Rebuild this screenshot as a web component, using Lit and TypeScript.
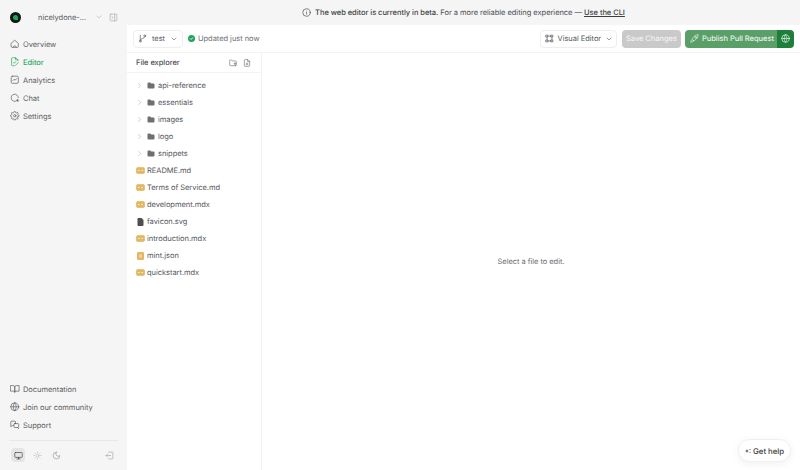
import { LitElement, html, css, svg } from "lit";
import { customElement } from "lit/decorators.js";

const ic = (body: unknown, size = 10, sw = 1.8) => html`<svg class="ic" width=${size} height=${size} viewBox="0 0 24 24" fill="none" stroke="currentColor" stroke-width=${sw} stroke-linecap="round" stroke-linejoin="round">${body}</svg>`;

const P = {
  home: svg`<path d="M3 11l9-8 9 8v8a2 2 0 0 1-2 2H5a2 2 0 0 1-2-2z"/><path d="M8 21c0-5 8-5 8 0"/>`,
  editor: svg`<path d="M20 9V7l-5-5H6a2 2 0 0 0-2 2v16a2 2 0 0 0 2 2h5"/><path d="M14 2v5h6"/><path d="M9 14l2 2 3-4"/><path d="M14 21l7-7"/>`,
  chart: svg`<rect x="3" y="3" width="18" height="18" rx="3"/><path d="M7 14l3-3 3 2 4-4"/>`,
  chat: svg`<path d="M21 12a9 9 0 1 0-4 7.5l4 1.5-1-4"/><circle cx="18" cy="18" r="1"/>`,
  gear: svg`<circle cx="12" cy="12" r="3"/><path d="M19.4 15a1.7 1.7 0 0 0 .3 1.8l.1.1a2 2 0 1 1-2.9 2.9l-.1-.1a1.7 1.7 0 0 0-2.8 1.2V21a2 2 0 1 1-4 0v-.1a1.7 1.7 0 0 0-2.9-1.1l-.1.1a2 2 0 1 1-2.8-2.9l.1-.1A1.7 1.7 0 0 0 3 14H3a2 2 0 1 1 0-4h.1a1.7 1.7 0 0 0 1.1-2.9l-.1-.1A2 2 0 1 1 7 4.2l.1.1a1.7 1.7 0 0 0 2.9-1.2V3a2 2 0 1 1 4 0v.1a1.7 1.7 0 0 0 2.9 1.2l.1-.1a2 2 0 1 1 2.8 2.8l-.1.1a1.7 1.7 0 0 0 1.2 2.9h.1a2 2 0 1 1 0 4h-.1a1.7 1.7 0 0 0-1.500 1z"/>`,
  book: svg`<path d="M2 4h6a4 4 0 0 1 4 4v13a3 3 0 0 0-3-3H2z"/><path d="M22 4h-6a4 4 0 0 0-4 4v13a3 3 0 0 1 3-3h7z"/>`,
  globe: svg`<circle cx="12" cy="12" r="10"/><path d="M2 12h20"/><path d="M12 2a15 15 0 0 1 0 20a15 15 0 0 1 0-20"/>`,
  support: svg`<path d="M14 9V5a2 2 0 0 0-2-2H4a2 2 0 0 0-2 2v12l4-3h3"/><rect x="10" y="9" width="12" height="10" rx="2"/><path d="M19 19l3 3"/>`,
  monitor: svg`<rect x="2" y="4" width="20" height="13" rx="2"/><path d="M8 21h8M12 17v4"/>`,
  sun: svg`<circle cx="12" cy="12" r="4"/><path d="M12 2v2M12 20v2M4.9 4.9l1.4 1.4M17.7 17.7l1.4 1.4M2 12h2M20 12h2M4.9 19.1l1.4-1.4M17.7 6.300l1.4-1.400"/>`,
  moon: svg`<path d="M12 3a6 6 0 0 0 9 9 9 9 0 1 1-9-9z"/>`,
  collapse: svg`<path d="M10 3H19a2 2 0 0 1 2 2v14a2 2 0 0 1-2 2H10"/><path d="M15 12H3M7 8l-4 4 4 4" />`,
  panel: svg`<rect x="3" y="3" width="18" height="18" rx="2"/><path d="M15 3v18"/><path d="M8 9l3 3-3 3"/>`,
  branch: svg`<circle cx="6" cy="19" r="2.500"/><circle cx="18" cy="5" r="2.500"/><path d="M6 3v13.500"/><path d="M6 16c0-5 12-3 12-8.500"/>`,
  chevD: svg`<path d="M6 9l6 6 6-6"/>`,
  chevR: svg`<path d="M9 5l7 7-7 7"/>`,
  info: svg`<circle cx="12" cy="12" r="10"/><path d="M12 16v-4M12 8h.01"/>`,
  newFolder: svg`<path d="M20 20H4a2 2 0 0 1-2-2V5a2 2 0 0 1 2-2h4l3 3h9a2 2 0 0 1 2 2v10a2 2 0 0 1-2 2z"/><path d="M15 14h6M18 11v6" />`,
  newFile: svg`<path d="M14 2H6a2 2 0 0 0-2 2v16a2 2 0 0 0 2 2h12a2 2 0 0 0 2-2V8z"/><path d="M14 2v6h6"/><path d="M9 15h6M12 12v6"/>`,
  visual: svg`<rect x="3" y="3" width="5" height="5"/><rect x="16" y="3" width="5" height="5"/><rect x="3" y="16" width="5" height="5"/><rect x="16" y="16" width="5" height="5"/><path d="M8 5.500h8M8 18.500h8M5.500 8v8M18.500 8v8"/>`,
  rocket: svg`<path d="M5 15c-2 1-3 5-3 7 2 0 6-1 7-3"/><path d="M9 18l-3-3c1-5 6-13 16-13 0 10-8 15-13 16z"/><circle cx="15" cy="9" r="2"/>`,
};

const folder = html`<svg width="8" height="7" viewBox="0 0 16 14"><path fill="#6f6f6f" d="M1 3a2 2 0 0 1 2-2h3.500l2 2H13a2 2 0 0 1 2 2v6a2 2 0 0 1-2 2H3a2 2 0 0 1-2-2z"/></svg>`;
const mdIcon = html`<svg width="9" height="7" viewBox="0 0 18 14"><rect x="1" y="1" width="16" height="12" rx="2.500" fill="#e2b863" stroke="#d8a648"/><path d="M4 7h3M11 7h3" stroke="#fff" stroke-width="1.600"/></svg>`;
const fileIcon = html`<svg width="7" height="8" viewBox="0 0 14 16"><path fill="#4d4f53" d="M2 0h7l4 4v10a2 2 0 0 1-2 2H2a2 2 0 0 1-1-2V1a2 2 0 0 1 1-1z"/></svg>`;
const jsonIcon = html`<svg width="7" height="8" viewBox="0 0 14 16"><rect width="14" height="16" rx="2.500" fill="#e2b863"/><path d="M5 5l4 6M9 5l-4 6" stroke="#fff" stroke-width="1.400"/></svg>`;

const navTop = [
  ["Overview", P.home, false],
  ["Editor", P.editor, true],
  ["Analytics", P.chart, false],
  ["Chat", P.chat, false],
  ["Settings", P.gear, false],
] as const;
const navBottom = [
  ["Documentation", P.book],
  ["Join our community", P.globe],
  ["Support", P.support],
] as const;
const folders = ["api-reference", "essentials", "images", "logo", "snippets"];
const files = [
  ["README.md", mdIcon],
  ["Terms of Service.md", mdIcon],
  ["development.mdx", mdIcon],
  ["favicon.svg", fileIcon],
  ["introduction.mdx", mdIcon],
  ["mint.json", jsonIcon],
  ["quickstart.mdx", mdIcon],
] as const;

@customElement("app-root")
export class AppRoot extends LitElement {
  static styles = css`
    :host {
      display: grid;
      grid-template-columns: 127px 1fr;
      width: 800px;
      height: 470px;
      overflow: hidden;
      background: #f5f5f5;
      color: #4b4d52;
      font-family: Inter, "Liberation Sans", sans-serif;
      font-size: 7.5px;
      letter-spacing: -0.04px;
      text-rendering: geometricPrecision;
      -webkit-font-smoothing: antialiased;
      will-change: opacity;
      position: relative;
    }
    .ic { flex: none; display: block; }
    .side { display: flex; flex-direction: column; height: 470px; box-sizing: border-box; padding: 0 9px; }
    .brand { height: 35px; flex: none; display: flex; align-items: center; padding: 0 0 1px 1px; box-sizing: border-box; }
    .logo { width: 11px; height: 11px; border-radius: 50%; background: #0d1a17; display: grid; place-items: center; margin-right: 17px; }
    .logo i { width: 5px; height: 5px; background: #22a45d; border-radius: 50% 50% 0 50%; display: block; }
    .org { flex: 1; color: #5c5e63; white-space: nowrap; }
    .brand .chev { color: #b0b0b0; margin-right: 6px; }
    .brand .pn { color: #adadad; }
    .nav { display: flex; flex-direction: column; }
    .item { height: 18px; display: flex; align-items: center; gap: 3.500px; padding-left: 1px; color: #5c5e63; white-space: nowrap; }
    .item.on { color: #2aa960; font-weight: 500; }
    .grow { flex: 1; }
    .theme { margin-top: 6px; border-top: 1px solid #e8e8e8; height: 28px; display: flex; align-items: center; padding: 0 0 0 2px; gap: 5px; margin-bottom: 1px; color: #9a9a9a; }
    .tb { width: 14px; height: 14px; border-radius: 4px; display: grid; place-items: center; }
    .tb.on { background: #e5e5e5; color: #3f4145; }
    .tb.light { color: #bdbdbd; }
    .theme .end { margin-left: auto; margin-right: 4px; color: #a5a5a5; }

    .content { display: flex; flex-direction: column; min-width: 0; }
    .beta { height: 25px; flex: none; display: flex; align-items: center; justify-content: center; gap: 4px; color: #4b4d52; white-space: nowrap; }
    .beta b { font-weight: 500; color: #3c3e42; }
    .beta a { font-weight: 500; color: #3c3e42; text-decoration: underline; }
    .beta .t { display: block; }
    .panel { flex: 1; background: #fff; display: flex; flex-direction: column; min-height: 0; }
    .toolbar { height: 28px; flex: none; display: flex; align-items: center; padding: 0 6px 0 6px; border-bottom: 1px solid #f3f3f3; gap: 5px; box-sizing: border-box; }
    .sel { height: 18px; box-sizing: border-box; border: 1px solid #eeeeee; border-radius: 4px; background: #fff; display: flex; align-items: center; color: #55575c; white-space: nowrap; }
    .sel.branch { width: 50px; padding: 0 6px 0 4px; gap: 5px; }
    .sel.branch span { flex: 1; }
    .status { display: flex; align-items: center; gap: 3px; color: #6f7176; margin-right: auto; white-space: nowrap; }
    .dot { width: 7px; height: 7px; border-radius: 50%; background: #1fa45a; display: grid; place-items: center; }
    .sel.vis { width: 77px; padding: 0 4px 0 4px; gap: 3.500px; }
    .sel.vis span { flex: 1; }
    .save { width: 59px; height: 18px; border-radius: 4px; background: #c9c9c9; color: #f2f2f2; display: grid; place-items: center; font-weight: 500; white-space: nowrap; }
    .pub { height: 18px; display: flex; border-radius: 4px; overflow: hidden; color: #eaf4ed; font-weight: 500; white-space: nowrap; margin-left: -1px; }
    .pub .a { width: 92px; background: #5a9e68; display: flex; align-items: center; gap: 3px; padding-left: 5px; box-sizing: border-box; }
    .pub .b { width: 17px; background: #1e7f3a; display: grid; place-items: center; }
    .split { flex: 1; display: grid; grid-template-columns: 135px 1fr; min-height: 0; }
    .explorer { border-right: 1px solid #f2f2f2; display: flex; flex-direction: column; }
    .exh { height: 20px; flex: none; display: flex; align-items: center; padding: 0 10px 0 9px; gap: 6px; border-bottom: 1px solid #f3f3f3; color: #4b4d52; font-weight: 500; box-sizing: border-box; }
    .exh span { flex: 1; }
    .exh svg { color: #6a6c70; }
    .tree { padding-top: 4px; display: flex; flex-direction: column; }
    .row { height: 17px; display: flex; align-items: center; white-space: nowrap; color: #55575c; padding-left: 9px; }
    .row .chev { color: #a0a0a0; width: 7px; margin-right: 4px; }
    .row .fic { width: 8px; display: grid; place-items: center; margin-right: 3px; }
    .row.file .fic { width: 8px; margin-right: 3px; }
    .empty { display: grid; place-items: center; color: #6c6e72; }
    .help { position: absolute; right: 9px; bottom: 8px; width: 53px; height: 23px; border-radius: 12px; background: #fff; border: 1px solid #f0f0f0; box-sizing: border-box; box-shadow: 0 2px 8px rgba(0,0,0,.06); display: flex; align-items: center; justify-content: center; gap: 2px; color: #3c3e42; font-weight: 500; white-space: nowrap; font-size: 7.800px; }
  `;

  render() {
    return html`
      <aside class="side">
        <div class="brand">
          <div class="logo"><i></i></div>
          <div class="org">nicelydone-...</div>
          <span class="chev">${ic(P.chevD, 8)}</span>
          <span class="pn">${ic(P.panel, 9)}</span>
        </div>
        <nav class="nav">
          ${navTop.map(([t, p, on]) => html`<div class="item ${on ? "on" : ""}">${ic(p, 9.5)}<span>${t}</span></div>`)}
        </nav>
        <div class="grow"></div>
        <nav class="nav">
          ${navBottom.map(([t, p]) => html`<div class="item">${ic(p, 9.5)}<span>${t}</span></div>`)}
        </nav>
        <div class="theme">
          <div class="tb on">${ic(P.monitor, 9)}</div>
          <div class="tb light">${ic(P.sun, 9)}</div>
          <div class="tb">${ic(P.moon, 9)}</div>
          <span class="end">${ic(P.collapse, 9)}</span>
        </div>
      </aside>
      <main class="content">
        <div class="beta">
          ${ic(P.info, 9)}
          <span class="t"><b>The web editor is currently in beta.</b> For a more reliable editing experience — <a>Use the CLI</a></span>
        </div>
        <div class="panel">
          <div class="toolbar">
            <div class="sel branch">${ic(P.branch, 9)}<span>test</span>${ic(P.chevD, 8)}</div>
            <div class="status"><div class="dot"><svg width="5" height="5" viewBox="0 0 10 10" fill="none" stroke="#fff" stroke-width="1.800"><path d="M2 5l2 2 4-4"/></svg></div><span>Updated just now</span></div>
            <div class="sel vis">${ic(P.visual, 9)}<span>Visual Editor</span>${ic(P.chevD, 8)}</div>
            <div class="save">Save Changes</div>
            <div class="pub"><div class="a">${ic(P.rocket, 9)}<span>Publish Pull Request</span></div><div class="b">${ic(P.globe, 9)}</div></div>
          </div>
          <div class="split">
            <section class="explorer">
              <div class="exh"><span>File explorer</span>${ic(P.newFolder, 8)}${ic(P.newFile, 8)}</div>
              <div class="tree">
                ${folders.map((f) => html`<div class="row"><span class="chev">${ic(P.chevR, 7)}</span><span class="fic">${folder}</span><span>${f}</span></div>`)}
                ${files.map(([f, i]) => html`<div class="row file"><span class="fic">${i}</span><span>${f}</span></div>`)}
              </div>
            </section>
            <div class="empty">Select a file to edit.</div>
          </div>
        </div>
      </main>
      <div class="help"><svg width="6" height="6" viewBox="0 0 12 12" fill="#3c3e42"><path d="M4 2l1 3 3 1-3 1-1 3-1-3-3-1 3-1z"/><circle cx="10" cy="3" r="1"/><circle cx="10" cy="9" r="1"/></svg><span>Get help</span></div>
    `;
  }
}
